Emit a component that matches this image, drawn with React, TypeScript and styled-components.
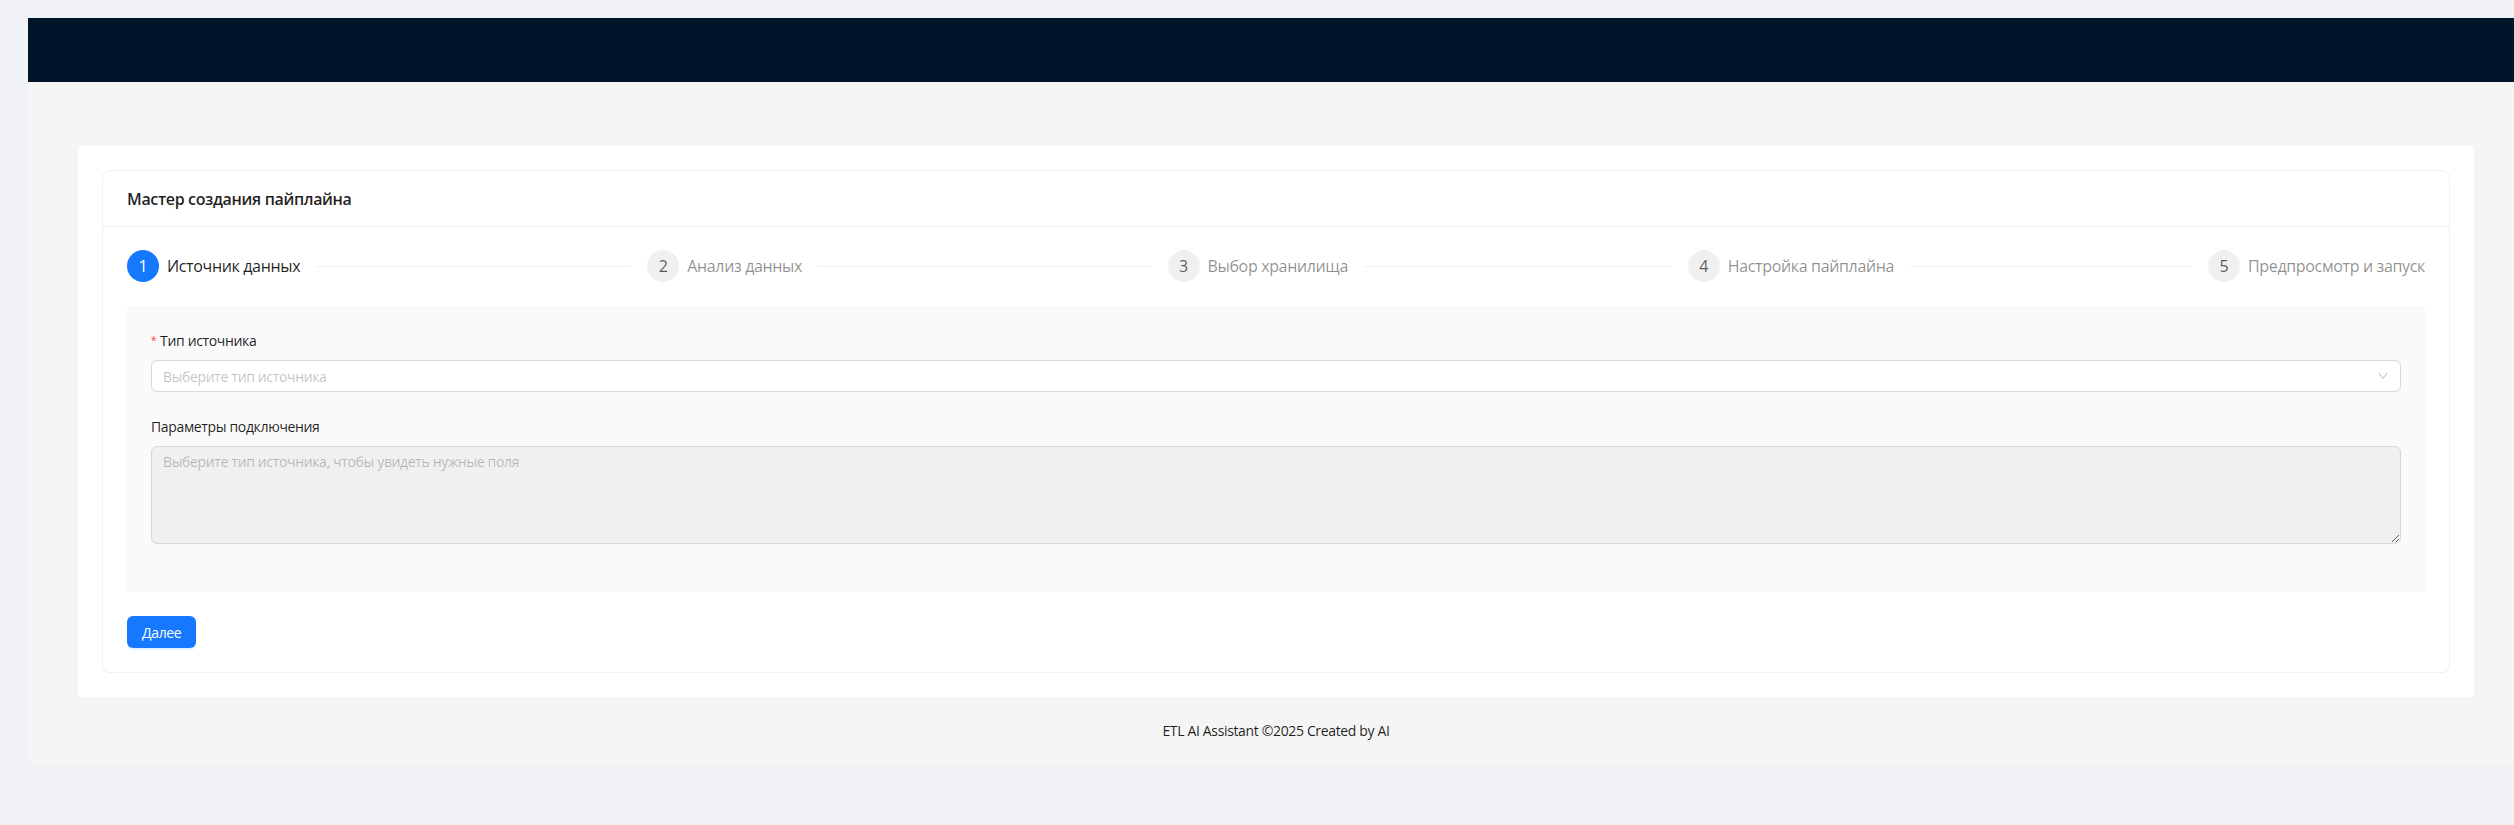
import styled, { createGlobalStyle } from 'styled-components';
import { AiOutlineDown } from 'react-icons/ai';

const GlobalStyle = createGlobalStyle`
  html, body {
    margin: 0;
    padding: 0;
    background: #f0f2f5;
    overflow: hidden;
  }
  *, *::before, *::after {
    box-sizing: border-box;
  }
  body {
    font-family: "Open Sans", "Noto Sans", "Liberation Sans", sans-serif;
    font-size: 14px;
    letter-spacing: -0.025em;
    color: rgba(0, 0, 0, 0.88);
  }
`;

const Page = styled.div`
  padding: 18px 0 0 28px;
  height: 825px;
`;

const Layout = styled.div`
  width: 2496px;
  display: flex;
  flex-direction: column;
  background: #f5f5f5;
`;

const Header = styled.header`
  height: 64px;
  background: #001529;
`;

const Content = styled.main`
  padding: 0 50px;
  margin-top: 64px;
`;

const Panel = styled.div`
  background: #fff;
  padding: 24px;
`;

const Card = styled.div`
  background: #fff;
  border: 1px solid #f0f0f0;
  border-radius: 8px;
`;

const CardHead = styled.div`
  height: 56px;
  padding: 0 24px;
  display: flex;
  align-items: center;
  border-bottom: 1px solid #f0f0f0;
  font-size: 16px;
  font-weight: 600;
`;

const CardBody = styled.div`
  padding: 23px 24px 24px;
`;

const Steps = styled.div`
  display: flex;
  margin-bottom: 24px;
`;

const Step = styled.div<{ $first: boolean; $last: boolean }>`
  display: flex;
  align-items: center;
  flex: ${(p) => (p.$last ? 'none' : '1')};
  padding-left: ${(p) => (p.$first ? '0' : '16px')};
  overflow: hidden;
`;

const StepIcon = styled.div<{ $active: boolean }>`
  width: 32px;
  height: 32px;
  flex: none;
  border-radius: 50%;
  display: flex;
  align-items: center;
  justify-content: center;
  font-size: 16px;
  letter-spacing: 0;
  background: ${(p) => (p.$active ? '#1677ff' : 'rgba(0, 0, 0, 0.06)')};
  color: ${(p) => (p.$active ? '#fff' : 'rgba(0, 0, 0, 0.65)')};
`;

const StepTitle = styled.div<{ $active: boolean; $last: boolean }>`
  margin-left: 8px;
  padding-right: ${(p) => (p.$last ? '0' : '16px')};
  font-size: 16px;
  line-height: 32px;
  white-space: nowrap;
  color: ${(p) => (p.$active ? 'rgba(0, 0, 0, 0.88)' : 'rgba(0, 0, 0, 0.45)')};
`;

const StepLine = styled.div`
  flex: 1;
  height: 1px;
  background: rgba(5, 5, 5, 0.06);
`;

const FormArea = styled.div`
  background: #fafafa;
  padding: 24px;
`;

const FormItem = styled.div`
  margin-bottom: 24px;
`;

const Label = styled.label`
  display: block;
  line-height: 22px;
  padding-bottom: 8px;
`;

const Required = styled.span`
  color: #ff4d4f;
  margin-right: 4px;
  font-family: SimSun, "Liberation Sans", sans-serif;
`;

const Select = styled.div`
  height: 32px;
  background: #fff;
  border: 1px solid #d9d9d9;
  border-radius: 6px;
  padding: 0 11px;
  display: flex;
  align-items: center;
  justify-content: space-between;
  color: rgba(0, 0, 0, 0.25);
`;

const TextArea = styled.textarea`
  display: block;
  width: 100%;
  height: 98px;
  padding: 4px 11px;
  border: 1px solid #d9d9d9;
  border-radius: 6px;
  background: #f0f0f0;
  font-family: inherit;
  font-size: 14px;
  letter-spacing: inherit;
  line-height: 22px;
  color: rgba(0, 0, 0, 0.25);
  &::placeholder {
    color: rgba(0, 0, 0, 0.25);
  }
`;

const Button = styled.button`
  margin-top: 24px;
  height: 32px;
  padding: 4px 15px;
  border: none;
  border-radius: 6px;
  background: #1677ff;
  color: #fff;
  font-family: inherit;
  font-size: 14px;
  letter-spacing: inherit;
  box-shadow: 0 2px 0 rgba(5, 145, 255, 0.1);
`;

const Footer = styled.footer`
  padding: 24px 50px;
  text-align: center;
  line-height: 19px;
`;

const steps = [
  'Источник данных',
  'Анализ данных',
  'Выбор хранилища',
  'Настройка пайплайна',
  'Предпросмотр и запуск',
];

export default function App() {
  const current = 0;
  return (
    <Page>
      <GlobalStyle />
      <Layout>
        <Header />
        <Content>
          <Panel>
            <Card>
              <CardHead>Мастер создания пайплайна</CardHead>
              <CardBody>
                {/* steps */}
                <Steps>
                  {steps.map((s, i) => {
                    const last = i === steps.length - 1;
                    return (
                      <Step key={s} $first={i === 0} $last={last}>
                        <StepIcon $active={i === current}>{i + 1}</StepIcon>
                        <StepTitle $active={i === current} $last={last}>
                          {s}
                        </StepTitle>
                        {!last && <StepLine />}
                      </Step>
                    );
                  })}
                </Steps>
                {/* form */}
                <FormArea>
                  <FormItem>
                    <Label>
                      <Required>*</Required>Тип источника
                    </Label>
                    <Select>
                      <span>Выберите тип источника</span>
                      <AiOutlineDown size={12} />
                    </Select>
                  </FormItem>
                  <FormItem>
                    <Label>Параметры подключения</Label>
                    <TextArea
                      disabled
                      placeholder="Выберите тип источника, чтобы увидеть нужные поля"
                    />
                  </FormItem>
                </FormArea>
                <Button type="button">Далее</Button>
              </CardBody>
            </Card>
          </Panel>
        </Content>
        <Footer>ETL AI Assistant ©2025 Created by AI</Footer>
      </Layout>
    </Page>
  );
}
